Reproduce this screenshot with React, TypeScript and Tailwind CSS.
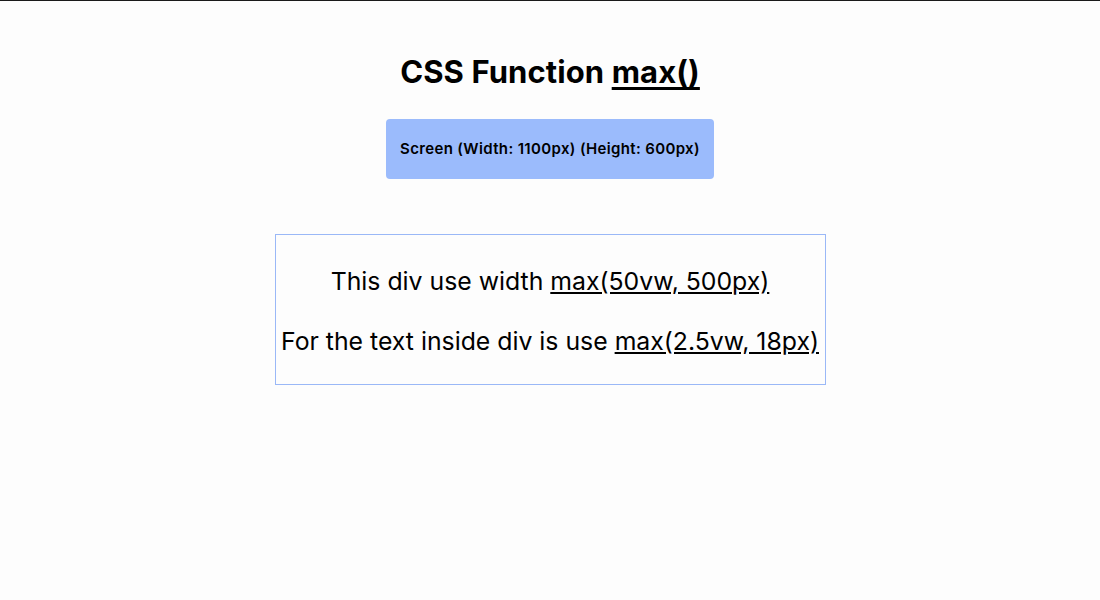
export default function App() {
  return (
    <div
      className="flex min-h-[600px] flex-col items-center border-t border-[#1a1a1a] bg-[#fdfdfd] text-black"
      style={{ fontFamily: "Inter, 'Noto Sans', sans-serif" }}
    >
      <h1 className="mt-[52px] text-[31px] font-bold leading-[38px] tracking-[0.1px]">
        CSS Function <u className="underline-offset-4">max()</u>
      </h1>
      <div className="mt-[28px] flex h-[60px] items-center rounded-[4px] bg-[#9bbbfc] px-[14px] text-[15px] font-semibold tracking-[0.35px]">
        Screen (Width: 1100px) (Height: 600px)
      </div>
      <div className="mt-[55px] flex h-[151px] w-[551px] flex-col items-center justify-center gap-[27px] border border-[#9ab8f7] pt-[3px] text-[24.8px] leading-[33px]">
        <p>
          This div use width <u>max(50vw, 500px)</u>
        </p>
        <p>
          For the text inside div is use <u>max(2.5vw, 18px)</u>
        </p>
      </div>
    </div>
  );
}
